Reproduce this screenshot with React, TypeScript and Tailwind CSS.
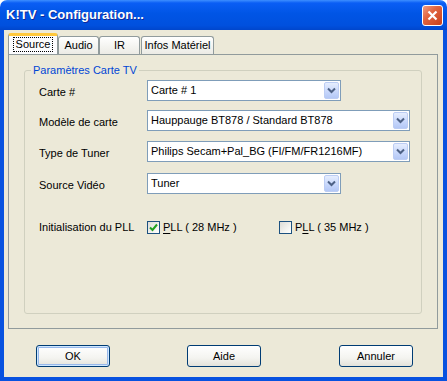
import React from "react";

const Chevron = () => (
  <svg width="9" height="7" viewBox="0 0 9 7">
    <path d="M1 1.5 L4.5 5 L8 1.5" stroke="#4D6185" strokeWidth="2" fill="none" />
  </svg>
);

function Combo({ value, width }: { value: string; width: string }) {
  return (
    <div className={`flex h-[21px] items-center border border-[#7F9DB9] bg-white ${width}`}>
      <span className="flex-1 truncate pl-[3px] text-black">{value}</span>
      <span className="mr-[1px] flex h-[17px] w-[15px] items-center justify-center rounded-[2px] border border-[#BCCDF4] bg-[linear-gradient(180deg,#E6EEFE_0%,#C6D6FB_60%,#B4C8F6_100%)]">
        <Chevron />
      </span>
    </div>
  );
}

function Check({ checked, children }: { checked?: boolean; children: React.ReactNode }) {
  return (
    <div className="flex items-center">
      <span className="flex h-[13px] w-[13px] items-center justify-center border border-[#1C5180] bg-[linear-gradient(135deg,#DCDCD7_0%,#F6F6F3_70%,#FFFFFF_100%)]">
        {checked && (
          <svg width="9" height="9" viewBox="0 0 9 9">
            <path d="M1 4.5 L3.5 7 L8 1.5" stroke="#21A121" strokeWidth="2" fill="none" />
          </svg>
        )}
      </span>
      <span className="ml-[3px]">{children}</span>
    </div>
  );
}

function Button({ label, primary }: { label: string; primary?: boolean }) {
  return (
    <button
      className={`h-[22px] w-[74px] rounded-[3px] border border-[#003C74] bg-[linear-gradient(180deg,#FFFFFF_0%,#F4F4F0_60%,#E3E2DA_100%)] text-black ${
        primary ? "shadow-[inset_0_0_0_1px_#CEE7FF,inset_0_0_0_2px_#98B8EA]" : ""
      }`}
    >
      {label}
    </button>
  );
}

export default function App() {
  const tabs = [
    { label: "Audio", w: "w-[41px]", ml: "ml-0" },
    { label: "IR", w: "w-[41px]", ml: "ml-0" },
    { label: "Infos Matériel", w: "w-[73px]", ml: "ml-[1px]" },
  ];

  return (
    <div className="flex h-[381px] w-[447px] flex-col font-['Liberation_Sans',Arial,sans-serif] text-[11px] text-black">
      {/* Title bar */}
      <div className="flex h-[30px] shrink-0 items-center rounded-t-[7px] bg-[linear-gradient(180deg,#3D8FFF_0%,#0A5EF5_10%,#0055E5_45%,#0050DE_85%,#0046CC_100%)] pl-[6px] pr-[4px]">
        <span className="text-[13px] font-bold text-white [text-shadow:1px_1px_0_#0F2A9A]">
          K!TV - Configuration...
        </span>
        <span className="ml-auto flex h-[21px] w-[21px] items-center justify-center rounded-[3px] border border-white bg-[linear-gradient(135deg,#EE9C84_0%,#E0643F_40%,#C9401B_100%)]">
          <svg width="11" height="11" viewBox="0 0 11 11">
            <path d="M1.5 1.5 L9.5 9.5 M9.5 1.5 L1.5 9.5" stroke="white" strokeWidth="2.2" />
          </svg>
        </span>
      </div>

      {/* Window body */}
      <div className="flex flex-1 flex-col border-x-[4px] border-b-[4px] border-[#0852E0] bg-[#ECE9D8] pl-[4px] pr-[5px] pt-[3px]">
        {/* Tabs */}
        <div className="flex h-[21px] items-end">
          <div className="relative z-10 flex h-[21px] w-[50px] items-center justify-center rounded-t-[3px] border-x border-t-[3px] border-x-[#919B9C] border-t-[#FFC83C] bg-[#FCFCFE] pb-[2px]">
            <span className="border border-dotted border-black px-[2px] leading-[13px]">Source</span>
          </div>
          {tabs.map((t) => (
            <div
              key={t.label}
              className={`flex h-[18px] items-center justify-center rounded-t-[3px] border-x border-t border-[#919B9C] bg-[linear-gradient(180deg,#FFFFFF_0%,#F3F3EF_60%,#ECEBE5_100%)] ${t.w} ${t.ml}`}
            >
              {t.label}
            </div>
          ))}
        </div>

        {/* Panel */}
        <div className="flex h-[275px] flex-col border border-[#919B9C] bg-[#ECE9D8] px-[15px] pb-[14px] pt-[9px]">
          <fieldset className="flex-1 rounded-[3px] border border-[#D0D0BF] px-0 pb-0">
            <legend className="ml-[6px] px-[2px] leading-[13px] text-[#0046D5]">Paramètres Carte TV</legend>
            <div className="flex flex-col pl-[14px] pt-[3px]">
              <div className="flex h-[21px] items-center">
                <span className="mt-[4px] w-[108px]">Carte #</span>
                <Combo value="Carte # 1" width="w-[194px]" />
              </div>
              <div className="mt-[9px] flex h-[21px] items-center">
                <span className="mt-[4px] w-[108px]">Modèle de carte</span>
                <Combo value="Hauppauge BT878 / Standard BT878" width="w-[263px]" />
              </div>
              <div className="mt-[10px] flex h-[21px] items-center">
                <span className="mt-[4px] w-[108px]">Type de Tuner</span>
                <Combo value="Philips Secam+Pal_BG (FI/FM/FR1216MF)" width="w-[263px]" />
              </div>
              <div className="mt-[11px] flex h-[21px] items-center">
                <span className="mt-[4px] w-[108px]">Source Vidéo</span>
                <Combo value="Tuner" width="w-[194px]" />
              </div>
              <div className="mt-[23px] flex h-[21px] items-center">
                <span className="w-[108px]">Initialisation du PLL</span>
                <div className="w-[132px]">
                  <Check checked>
                    <span className="underline underline-offset-2">P</span>LL ( 28 MHz )
                  </Check>
                </div>
                <Check>
                  P<span className="underline underline-offset-2">L</span>L ( 35 MHz )
                </Check>
              </div>
            </div>
          </fieldset>
        </div>

        {/* Buttons */}
        <div className="mt-[16px] flex pl-[28px]">
          <Button label="OK" primary />
          <span className="ml-[77px]">
            <Button label="Aide" />
          </span>
          <span className="ml-[78px]">
            <Button label="Annuler" />
          </span>
        </div>
      </div>
    </div>
  );
}
